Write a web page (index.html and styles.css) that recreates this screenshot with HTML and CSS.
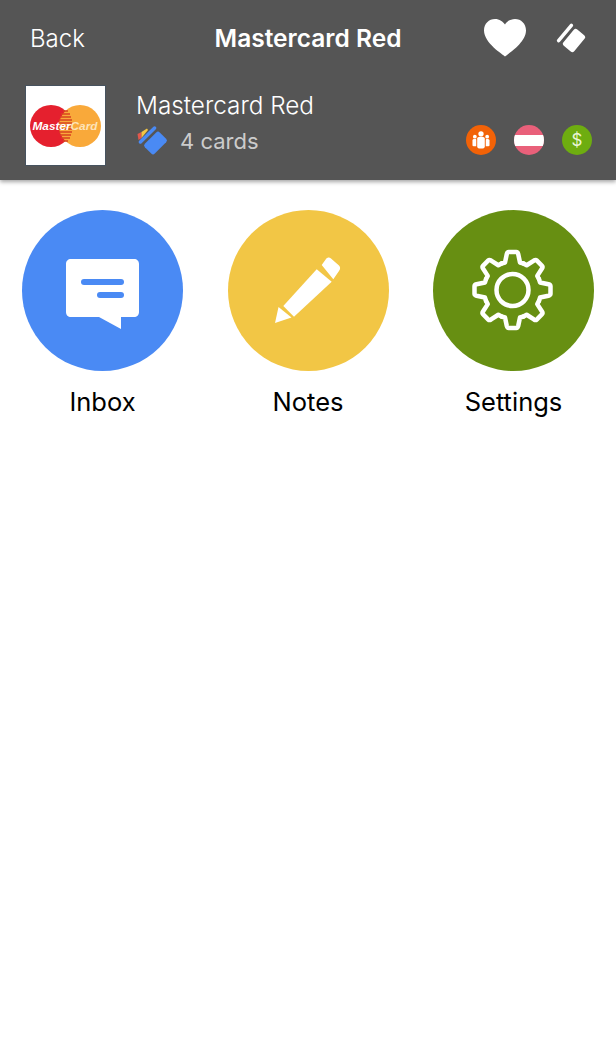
FILE: index.html
```html
<!DOCTYPE html>
<html lang="en">
<head>
    <meta charset="UTF-8">
    <title>Mastercard Red</title>
    <link rel="stylesheet" href="styles.css">
</head>
<body>
<div class="head">
    <div class="topbar">
        <a class="back">Back</a>
        <h1 class="title">Mastercard Red</h1>
        <div class="actions">
            <svg class="heart" width="42" height="38" viewBox="0 0 42 38"><path fill="#fff" d="M21 37.500C19 35.500 0 24 0 11.500C0 4.500 5 0 11 0C15.500 0 19 2.500 21 5.500C23 2.500 26.500 0 31 0C37 0 42 4.500 42 11.500C42 24 23 35.500 21 37.500Z"/></svg>
            <svg class="cards" width="30" height="32" viewBox="0 0 30 32">
                <path d="M2.600 18.700L15.400 3.300" stroke="#fff" stroke-width="3.500" stroke-linecap="round"/>
                <rect x="7.500" y="11.500" width="21" height="14" rx="2.500" fill="#fff" transform="rotate(-50 18 18.500)"/>
            </svg>
        </div>
    </div>
    <div class="info">
        <div class="thumb">
            <svg width="79" height="80" viewBox="0 0 79 80">
                <circle cx="25" cy="40" r="21" fill="#e5202e"/>
                <circle cx="54" cy="40" r="21" fill="#f9a93a"/>
                <g stroke="#d8431f" stroke-width="1.300">
                    <path d="M37 25H42M35 28H44M34 31H45M33 34H46M33 37H46M33 40H46M33 43H46M33 46H46M34 49H45M35 52H44M37 55H42"/>
                </g>
                <text class="mc-word" x="39" y="44" text-anchor="middle">Master<tspan class="mc-card">Card</tspan></text>
            </svg>
        </div>
        <div class="meta">
            <div class="name">Mastercard Red</div>
            <div class="count">
                <svg width="32" height="32" viewBox="0 0 32 32">
                    <path fill="#e2574c" d="M1.500 9L5.500 7V13L2.500 15Z"/>
                    <path fill="#f2c645" d="M5.500 7L11 3.500L12 5L5.500 13Z"/>
                    <path d="M4.400 17L18.600 3" stroke="#4a8af4" stroke-width="3.500" stroke-linecap="round"/>
                    <rect x="9" y="11" width="21" height="14" rx="2.500" fill="#4a8af4" transform="rotate(-45 19.500 18)"/>
                </svg>
                <span>4 cards</span>
            </div>
        </div>
        <div class="badges">
            <span class="badge badge-orange">
                <svg width="22" height="18" viewBox="0 0 23 19" fill="#fff">
                    <circle cx="11.500" cy="3" r="2.800"/>
                    <path d="M7.500 8C7.500 6.500 9 6 11.500 6S15.500 6.500 15.500 8V16C15.500 18 14 18.500 11.500 18.500S7.500 18 7.500 16Z"/>
                    <circle cx="5" cy="6" r="2"/>
                    <circle cx="18" cy="6" r="2"/>
                    <path d="M2.500 10C2.500 9 3.500 8.500 5 8.500S6.500 9 6.500 10V16H3.500C3 16 2.500 15.500 2.500 15Z"/>
                    <path d="M16.500 10C16.500 9 17 8.500 18 8.500S20.500 9 20.500 10V15C20.500 15.500 20 16 19.500 16H16.500Z"/>
                </svg>
            </span>
            <span class="badge badge-pink"><i class="band"></i></span>
            <span class="badge badge-green">$</span>
        </div>
    </div>
</div>
<div class="menu">
    <div class="item">
        <div class="circle blue">
            <svg width="161" height="161" viewBox="0 0 161 161">
                <path fill="#fff" d="M49 49H112C115 49 117 51 117 54V102C117 105 115 107 112 107H99V119L77 107H49C46 107 44 105 44 102V54C44 51 46 49 49 49Z"/>
                <g stroke="#4a8af4" stroke-width="6" stroke-linecap="round">
                    <path d="M62 72H99"/>
                    <path d="M78 85H99"/>
                </g>
            </svg>
        </div>
        <div class="label">Inbox</div>
    </div>
    <div class="item">
        <div class="circle yellow">
            <svg width="161" height="161" viewBox="0 0 161 161" fill="#fff">
                <path d="M47 113L50.500 97L63.500 107.500Z"/>
                <path d="M55.300 96L88.700 59.300L103.700 71.700L66 106.700Z"/>
                <path d="M93.700 55L98 49C99.500 47 101.500 47 103 48.500L111 55.500C112.500 57 112.500 59 111 61L105.300 69.300Z"/>
            </svg>
        </div>
        <div class="label">Notes</div>
    </div>
    <div class="item">
        <div class="circle green">
            <svg width="161" height="161" viewBox="-79.500 -80 161 161" fill="none" stroke="#fff" stroke-width="4.500" stroke-linejoin="round" stroke-linecap="round">
                <defs>
                    <path id="tooth" d="M-11 -26.500L-7.500 -27.500L-5.700 -36Q-5.200 -38 -3.800 -38H3.800Q5.200 -38 5.700 -36L7.500 -27.500L11 -26.500"/>
                </defs>
                <use href="#tooth"/>
                <use href="#tooth" transform="rotate(45)"/>
                <use href="#tooth" transform="rotate(90)"/>
                <use href="#tooth" transform="rotate(135)"/>
                <use href="#tooth" transform="rotate(180)"/>
                <use href="#tooth" transform="rotate(225)"/>
                <use href="#tooth" transform="rotate(270)"/>
                <use href="#tooth" transform="rotate(315)"/>
                <circle r="16"/>
            </svg>
        </div>
        <div class="label">Settings</div>
    </div>
</div>
</body>
</html>
```

FILE: styles.css
```css
*{
    box-sizing: border-box;
}
html,body{
    margin:0;
    background:#fff;
}
body{
    width:616px;
    height:1060px;
    overflow:hidden;
    font-family:Inter,"Noto Sans",sans-serif;
}
.head{
    height:180px;
    background:#555;
    box-shadow:0 2px 4px rgba(0,0,0,.35);
    color:#fff;
}
.topbar{
    display:grid;
    grid-template-columns:1fr auto 1fr;
    align-items:center;
    height:76px;
    padding:0 30px;
}
.back{
    font-size:24px;
    font-weight:300;
}
.title{
    margin:0;
    font-size:24.500px;
    font-weight:600;
}
.actions{
    display:flex;
    justify-content:flex-end;
    align-items:center;
    gap:30px;
}
.info{
    display:flex;
    padding:9px 24px 0 25px;
}
.thumb{
    width:81px;
    height:81px;
    border:1px solid #47535f;
    background:#fff;
}
.thumb svg{
    display:block;
}
.mc-word{
    font:italic 700 11.800px "Liberation Sans",sans-serif;
    fill:#fff;
}
.mc-card{
    fill:#fde3b8;
}
.meta{
    margin-left:30px;
    padding-top:7px;
    flex:1;
}
.name{
    height:27px;
    line-height:27px;
    font-size:24.300px;
    font-weight:300;
}
.count{
    display:flex;
    align-items:center;
    gap:12px;
    height:34px;
    margin-top:5px;
    font-size:22px;
    color:#ccc;
}
.badges{
    display:flex;
    align-items:center;
    gap:18px;
    height:30px;
    margin-top:40px;
}
.badge{
    display:flex;
    justify-content:center;
    align-items:center;
    width:30px;
    height:30px;
    border-radius:50%;
    overflow:hidden;
}
.badge-orange{
    background:#f26207;
}
.badge-pink{
    background:#e9607a;
}
.band{
    width:100%;
    height:11px;
    background:#fff;
}
.badge-green{
    background:#6ead10;
    font-size:17px;
    color:#eaf5d5;
}
.menu{
    display:flex;
    justify-content:space-between;
    padding:30px 22px 0;
}
.item{
    width:161px;
}
.circle{
    width:161px;
    height:161px;
    border-radius:50%;
}
.circle svg{
    display:block;
}
.blue{
    background:#4a8af4;
}
.yellow{
    background:#f2c645;
}
.green{
    background:#678f12;
}
.label{
    margin-top:15px;
    line-height:32px;
    font-size:25.500px;
    text-align:center;
    color:#000;
}
```
